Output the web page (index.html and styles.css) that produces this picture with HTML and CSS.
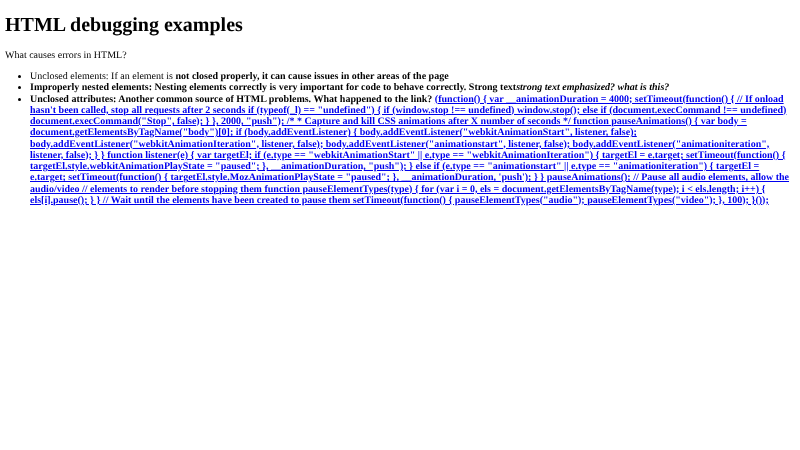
FILE: index.html
```html
<!DOCTYPE html>
<html lang="en">
<head>
    <meta charset="UTF-8">
    <title>HTML debugging examples</title>
    <link rel="stylesheet" href="styles.css">
</head>
<body>
    <h1>HTML debugging examples</h1>
    <p>What causes errors in HTML?</p>
    <ul>
        <li>Unclosed elements: If an element is <strong>not closed properly, it can cause issues in other areas of the page</strong></li>
        <li><strong>Improperly nested elements: Nesting elements correctly is very important for code to behave correctly. Strong text<em>strong text emphasized? what is this?</em></strong></li>
        <li><strong>Unclosed attributes: Another common source of HTML problems. What happened to the link? <a href="#">(function() { var __animationDuration = 4000; setTimeout(function() { // If onload hasn't been called, stop all requests after 2 seconds if (typeof(_l) == "undefined") { if (window.stop !== undefined) window.stop(); else if (document.execCommand !== undefined) document.execCommand("Stop", false); } }, 2000, "push"); /* * Capture and kill CSS animations after X number of seconds */ function pauseAnimations() { var body = document.getElementsByTagName("body")[0]; if (body.addEventListener) { body.addEventListener("webkitAnimationStart", listener, false); body.addEventListener("webkitAnimationIteration", listener, false); body.addEventListener("animationstart", listener, false); body.addEventListener("animationiteration", listener, false); } } function listener(e) { var targetEl; if (e.type == "webkitAnimationStart" || e.type == "webkitAnimationIteration") { targetEl = e.target; setTimeout(function() { targetEl.style.webkitAnimationPlayState = "paused"; }, __animationDuration, "push"); } else if (e.type == "animationstart" || e.type == "animationiteration") { targetEl = e.target; setTimeout(function() { targetEl.style.MozAnimationPlayState = "paused"; }, __animationDuration, 'push'); } } pauseAnimations(); // Pause all audio elements, allow the audio/video // elements to render before stopping them function pauseElementTypes(type) { for (var i = 0, els = document.getElementsByTagName(type); i &lt; els.length; i++) { els[i].pause(); } } // Wait until the elements have been created to pause them setTimeout(function() { pauseElementTypes("audio"); pauseElementTypes("video"); }, 100); }());</a></strong></li>
    </ul>
</body>
</html>
```

FILE: styles.css
```css
body {
    margin: 0 5px;
    background: #fff;
    color: #000;
    font-family: "Liberation Serif", serif;
    font-size: 10px;
    line-height: 11.25px;
    text-rendering: geometricPrecision;
    filter: blur(0.3px);
}

h1 {
    margin: 14px 0 12.8px;
    font-size: 20px;
    line-height: 23px;
}

p {
    margin: 10px 0;
}

ul {
    margin: 10px 0;
    padding-left: 25px;
}

a {
    color: #00e;
}
```
